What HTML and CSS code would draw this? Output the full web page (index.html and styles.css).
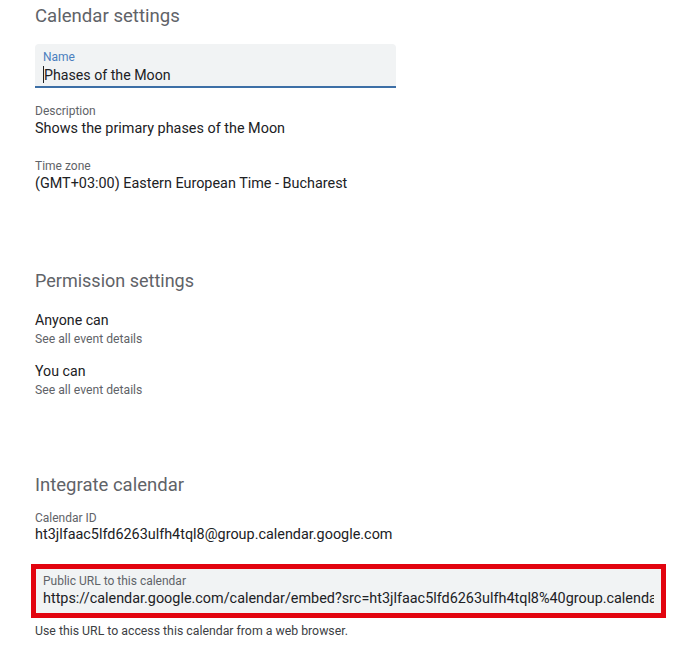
FILE: index.html
```html
<!DOCTYPE html>
<html lang="en">
<head>
<meta charset="utf-8">
<title>Calendar settings</title>
<link rel="stylesheet" href="styles.css">
</head>
<body>
<main class="page">
  <h2 class="section-title first">Calendar settings</h2>

  <div class="text-field focused">
    <div class="tf-label">Name</div>
    <div class="tf-value name"><span class="caret"></span>Phases of the Moon</div>
  </div>

  <div class="item desc">
    <div class="item-label">Description</div>
    <div class="item-value">Shows the primary phases of the Moon</div>
  </div>

  <div class="item tz">
    <div class="item-label">Time zone</div>
    <div class="item-value">(GMT+03:00) Eastern European Time - Bucharest</div>
  </div>

  <h2 class="section-title perm">Permission settings</h2>

  <div class="perm-item first-perm">
    <div class="perm-title">Anyone can</div>
    <div class="perm-sub">See all event details</div>
  </div>
  <div class="perm-item second-perm">
    <div class="perm-title">You can</div>
    <div class="perm-sub">See all event details</div>
  </div>

  <h2 class="section-title integ">Integrate calendar</h2>

  <div class="item calid">
    <div class="item-label">Calendar ID</div>
    <div class="item-value id-value">ht3jlfaac5lfd6263ulfh4tql8@group.calendar.google.com</div>
  </div>

  <div class="highlight">
    <div class="text-field url-field">
      <div class="tf-label gray">Public URL to this calendar</div>
      <div class="tf-value url">https://calendar.google.com/calendar/embed?src=ht3jlfaac5lfd6263ulfh4tql8%40group.calendar.google.com&amp;ctz=Europe%2FBucharest</div>
    </div>
  </div>
  <div class="hint">Use this URL to access this calendar from a web browser.</div>
</main>
</body>
</html>
```

FILE: styles.css
```css
html, body {
  margin: 0;
  padding: 0;
  background: #ffffff;
}

body {
  font-family: Roboto, "Liberation Sans", Arial, sans-serif;
  color: #202124;
}

.page {
  padding: 0 0 0 35px;
  width: 640px;
}

.section-title {
  margin: 0;
  font-size: 18px;
  font-weight: 400;
  line-height: 24px;
  color: #5f6368;
}

.section-title.first { margin-top: 4px; font-size: 18.6px; }
.section-title.perm { margin-top: 75px; }
.section-title.integ { margin-top: 74px; font-size: 18.5px; }

.text-field {
  background: #f1f3f4;
  border-radius: 4px 4px 0 0;
  box-sizing: border-box;
}

.text-field.focused {
  margin-top: 16px;
  width: 361px;
  height: 44px;
  padding: 6px 8px 0;
  border-bottom: 2px solid #3d6fa6;
}

.tf-label {
  font-size: 12px;
  line-height: 14px;
  color: #4a7fbe;
}

.tf-label.gray { color: #5f6368; }

.tf-value {
  font-size: 14.4px;
  line-height: 22px;
  color: #202124;
  white-space: nowrap;
  overflow: hidden;
}

.tf-value.name { font-size: 14.2px; }

.caret {
  display: inline-block;
  width: 1px;
  height: 17px;
  background: #202124;
  vertical-align: -3px;
}

.item-label {
  font-size: 12px;
  line-height: 16px;
  color: #5f6368;
}

.item-value {
  font-size: 14.4px;
  line-height: 20px;
  color: #202124;
}

.item.desc { margin-top: 15px; }
.item.tz { margin-top: 19px; }
.item.calid { margin-top: 13px; }

.id-value {
  line-height: 18px;
}

.perm-title {
  font-size: 14.2px;
  line-height: 20px;
  color: #202124;
}

.perm-sub {
  font-size: 12.2px;
  line-height: 18px;
  color: #5f6368;
}

.first-perm { margin-top: 17px; }
.second-perm { margin-top: 13px; }

.highlight {
  margin-top: 20px;
  margin-left: -4px;
  width: 635px;
  border: 5px solid #e2040f;
  box-sizing: border-box;
}

.url-field {
  height: 44px;
  padding: 5px 7px 0;
  border-radius: 0;
}

.hint {
  margin-top: 5px;
  font-size: 12.3px;
  line-height: 16px;
  color: #3c4043;
}
```
